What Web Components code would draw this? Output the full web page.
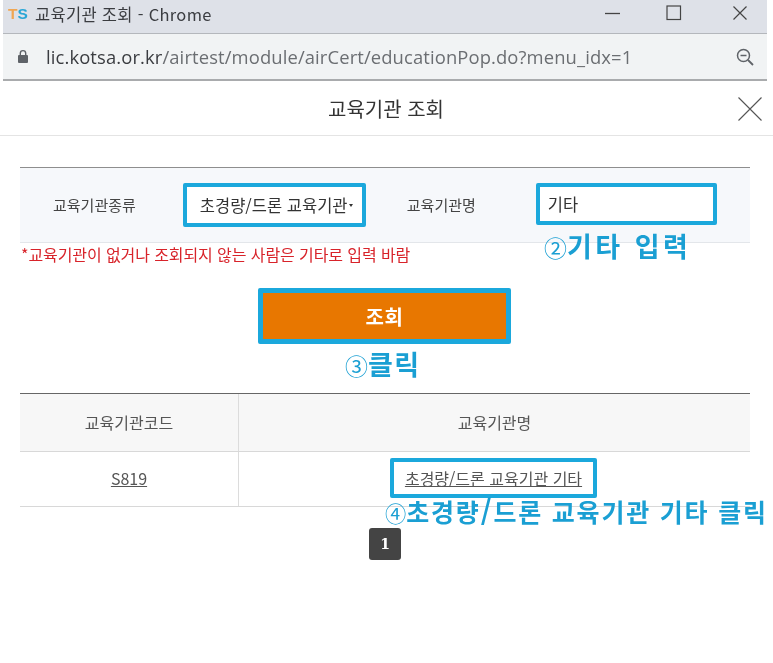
<!DOCTYPE html>
<html lang="ko"><head><meta charset="utf-8"><title>교육기관 조회</title>
<style>
html,body{margin:0;padding:0;background:#fff}
body{font-family:"Noto Sans CJK KR","Noto Sans",sans-serif;color:#333;width:773px;height:663px;overflow:hidden;position:relative;filter:blur(.35px)}
.d{font-weight:400;font-size:.85em;letter-spacing:0}
.sl{font-size:1.12em}
</style></head><body>
<browser-chrome></browser-chrome>
<pop-header>교육기관 조회</pop-header>
<search-panel></search-panel>
<red-note>*교육기관이 없거나 조회되지 않는 사람은 기타로 입력 바람</red-note>
<search-button>조회</search-button>
<result-table></result-table>
<page-num>1</page-num>
<call-out style="left:544px;top:226px;font-size:27px;letter-spacing:3.5px"><span class="d">②</span>기타 입력</call-out>
<call-out style="left:345px;top:344px;font-size:27px;letter-spacing:1.5px"><span class="d">③</span>클릭</call-out>
<call-out style="left:385px;top:490px;font-size:25px;letter-spacing:1.8px"><span class="d">④</span>초경량<span class="sl">/</span>드론 교육기관 기타 클릭</call-out>
<script>
function def(name,html){customElements.define(name,class extends HTMLElement{constructor(){super();this.attachShadow({mode:'open'}).innerHTML=html}})}
def('browser-chrome',`<style>
:host{display:block;margin:0 6px 0 3px;height:81px;box-sizing:border-box;border-bottom:2px solid #a9abad}
.t{height:33px;box-sizing:content-box;background:#dee1e8;border-bottom:1px solid #b4b7bc;display:flex;align-items:center;padding-left:4px;gap:6px;font:16.5px "Noto Sans CJK KR",sans-serif;color:#3a3c40}
.name{flex:1;letter-spacing:.3px;position:relative;top:-3px}
.logo{font:700 15.5px/1 "Liberation Sans",sans-serif;width:22px;text-align:center;position:relative;top:-3px}
.logo b:first-child{color:#f0a653}.logo b:last-child{color:#29a6d6}
.win{display:flex;align-items:center;padding-right:19px;position:relative;top:-4px}
.win svg:nth-child(1){margin-right:45px}.win svg:nth-child(2){margin-right:50px}
.a{height:45px;background:#f1f3f4;display:flex;align-items:center;padding:0 13px 0 14px;gap:17px;font:18.4px "Open Sans",sans-serif;letter-spacing:.12px;color:#6b6e72}
.a span{flex:1;white-space:nowrap}.a b{font-weight:400;color:#3a3c40}
svg{display:block}
</style>
<div class="t"><span class="logo"><b>T</b><b>S</b></span><span class="name">교육기관 조회 - Chrome</span>
<div class="win">
<svg width="16" height="16" viewBox="0 0 16 16"><path d="M0 8.500H15" stroke="#444" stroke-width="1.300"/></svg>
<svg width="16" height="16" viewBox="0 0 16 16"><rect x="1" y="1" width="13.500" height="13.500" fill="none" stroke="#444" stroke-width="1.200"/></svg>
<svg width="16" height="16" viewBox="0 0 16 16"><path d="M1.500 1.500L14.500 14.500M14.500 1.500L1.500 14.500" stroke="#444" stroke-width="1.200"/></svg>
</div></div>
<div class="a">
<svg width="12" height="15" viewBox="0 0 12 15"><path d="M3.300 6V4.300a2.700 2.700 0 0 1 5.400 0V6" fill="none" stroke="#5f6368" stroke-width="1.400"/><rect x="1" y="6" width="10" height="8" rx="1" fill="#5f6368"/></svg>
<span><b>lic.kotsa.or.kr</b>/airtest/module/airCert/educationPop.do?menu_idx=1</span>
<svg width="18" height="18" viewBox="0 0 18 18"><circle cx="7.500" cy="7.500" r="6" fill="none" stroke="#5f6368" stroke-width="1.500"/><path d="M12 12L17 17" stroke="#5f6368" stroke-width="1.800"/><path d="M4.500 7.500H10.500" stroke="#5f6368" stroke-width="1.500"/></svg>
</div>`);
def('pop-header',`<style>
:host{display:flex;align-items:center;justify-content:center;position:relative;height:54px;border-bottom:1px solid #e4e4e4;font-size:20px;color:#333;padding-right:1px;box-sizing:content-box}
svg{position:absolute;right:11px;top:16px}
</style><slot></slot><svg width="24" height="24" viewBox="0 0 24 24"><path d="M.5.500L23.500 23.500M23.500.500L.5 23.500" stroke="#555" stroke-width="1.100"/></svg>`);
def('search-panel',`<style>
:host{display:flex;align-items:flex-start;margin:31px 23px 0 20px;height:76px;box-sizing:border-box;border-top:1px solid #8e8e8e;border-bottom:1px solid #e3e6ea;background:#f6f8fb;font-size:15px;color:#444;padding-top:15px}
.l{line-height:44px;white-space:nowrap}
.box{box-sizing:border-box;border:4px solid #1ba8dc;border-radius:2px;background:#fff;display:flex;align-items:center;color:#333;font-size:16.500px;white-space:nowrap;overflow:hidden}
.s{width:183px;height:44px;margin-left:47px;padding-left:13px;position:relative}
.s::after{content:"";border:2px solid transparent;border-top:3px solid #333;border-bottom:0;margin-left:1px}
.n{width:181px;height:42px;margin-left:60px;padding-left:8px}
</style>
<span class="l" style="margin-left:33px">교육기관종류</span><div class="box s">초경량/드론 교육기관</div>
<span class="l" style="margin-left:41px">교육기관명</span><div class="box n">기타</div>`);
def('red-note',`<style>:host{display:block;margin:0 0 0 21px;font-size:16px;line-height:22px;color:#d8232a;letter-spacing:-.09px;white-space:nowrap}</style><slot></slot>`);
def('search-button',`<style>
:host{display:flex;align-items:center;justify-content:center;box-sizing:border-box;width:253px;height:56px;margin:23px 0 0 258px;border:5px solid #1ba8dc;border-radius:2px;background:#e87700;color:#fff;font-size:20px;font-weight:700;letter-spacing:.5px}
</style><slot></slot>`);
def('result-table',`<style>
:host{display:block;margin:49px 23px 0 20px;border-top:1px solid #666;font-size:16px;color:#555}
.r{display:grid;grid-template-columns:219px 1fr;text-align:center}
.r>div{display:flex;align-items:center;justify-content:center;padding-bottom:2px}
.r>div:first-child{border-right:1.500px solid #dcdcdc}
.h{height:57px;background:#f7f7f7;border-bottom:1px solid #d8d8d8}
.b{height:54px;border-bottom:1px solid #d8d8d8}
u{color:#555}
.k{box-sizing:border-box;width:207px;height:40px;border:4px solid #1ba8dc;border-radius:2px;display:flex;align-items:center;justify-content:center;background:#fff;margin-right:2px;position:relative;white-space:nowrap}
</style>
<div class="r h"><div>교육기관코드</div><div>교육기관명</div></div>
<div class="r b"><div><u>S819</u></div><div><div class="k"><u>초경량/드론 교육기관 기타</u></div></div></div>`);
def('page-num',`<style>
:host{display:flex;align-items:center;justify-content:center;box-sizing:border-box;width:32px;height:32px;margin:21px 0 0 369px;border-radius:3px;background:#444;color:#fff;font:700 14px "DejaVu Serif",serif}
</style><slot></slot>`);
def('call-out',`<style>:host{position:absolute;display:block;white-space:nowrap;color:#1a9fd3;font-weight:700;line-height:40px;font-family:"Noto Sans CJK KR",sans-serif}</style><slot></slot>`);
</script>
</body></html>
